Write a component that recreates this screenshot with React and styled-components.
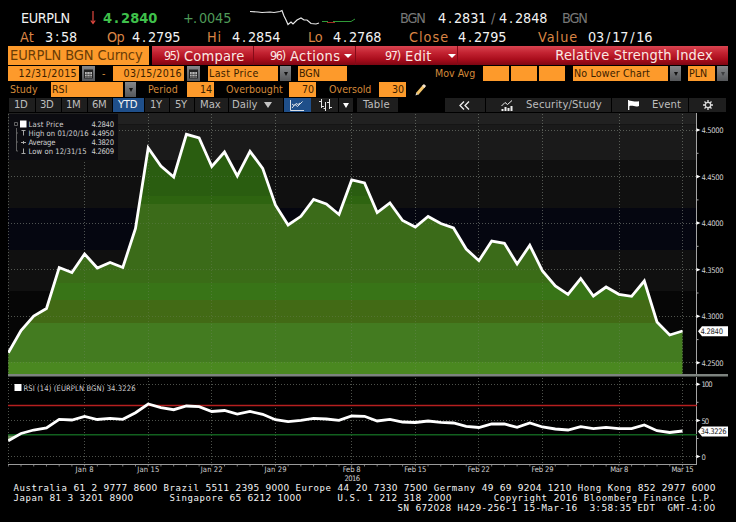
import React from "react";
import styled, { createGlobalStyle } from "styled-components";

const SANS = `"DejaVu Sans Condensed", "Noto Sans", sans-serif`;

const GlobalStyle = createGlobalStyle`
  body { margin: 0; background: #000; }
  * { box-sizing: border-box; }
`;

const Screen = styled.main`
  width: 736px;
  height: 522px;
  padding: 8px 8px 0;
  overflow: hidden;
  background: #000;
  color: #f4f4f4;
  font-family: ${SANS};
  font-stretch: condensed;
`;

const Row = styled.div`
  display: flex;
  align-items: center;
  height: ${(p) => p.$h}px;
  white-space: pre;
`;

/* ---------- quote header ---------- */

const TONES = {
  plain: "#f2f2f2",
  label: "#d98545",
  dim: "#777",
  up: "#4f9a58",
};

const QuoteText = styled.span`
  flex: none;
  width: ${(p) => p.$w}px;
  margin-left: ${(p) => p.$ml || 0}px;
  color: ${(p) => TONES[p.$tone || "plain"]};
  font-size: 14.3px;
  letter-spacing: ${(p) => p.$ls ?? -0.12}px;
`;

const LastPrice = styled(QuoteText)`
  color: #3fc04b;
  font-weight: 700;
  font-size: 14.5px;
`;

const Cell = styled.span`
  display: inline-block;
  width: ${(p) => p.$w}px;
  text-align: center;
`;

const cells = (value, w = 8) =>
  value.split(/([.:/+])/).filter(Boolean).map((part, i) =>
    /[.:/+]/.test(part) ? <Cell key={i} $w={w}>{part}</Cell> : part
  );

const Drawing = styled.svg`
  flex: none;
  display: block;
  margin-left: ${(p) => p.$ml || 0}px;
  overflow: visible;
`;

/* ---------- red menu bar ---------- */

const Security = styled.div`
  flex: none;
  width: 141px;
  height: 19px;
  margin-right: 3px;
  padding-left: 2px;
  background: #fd9a2b;
  color: #6a3c06;
  font-size: 14.5px;
  line-height: 19px;
  letter-spacing: -0.1px;
`;

const MenuBar = styled.div`
  display: flex;
  flex: 1;
  height: 19px;
  line-height: 18px;
  background: linear-gradient(#d94450 0, #c32332 35%, #aa0d1c 70%, #7e0613 100%);
`;

const MenuItem = styled.div`
  display: flex;
  align-items: center;
  flex: none;
  width: ${(p) => p.$w}px;
  padding-left: ${(p) => p.$pl}px;
  border-right: 1px solid #850b18;
  color: #fbe9e4;
  font-size: 14.5px;
  letter-spacing: ${(p) => p.$ls || 0}px;
`;

const MenuKey = styled.span`
  flex: none;
  width: ${(p) => p.$w || 20}px;
  font-size: 12.5px;
  letter-spacing: -1.3px;
`;

const Caret = styled.span`
  flex: none;
  width: 0;
  height: 0;
  margin-left: ${(p) => p.$ml || 0}px;
  border: ${(p) => p.$s || 4}px solid transparent;
  border-top: ${(p) => p.$h || (p.$s || 4)}px solid ${(p) => p.$c || "#fff"};
  border-bottom: 0;
`;

const BarTitle = styled.div`
  margin-left: auto;
  margin-right: 15px;
  color: #fbe9e4;
  font-size: 14.5px;
  letter-spacing: 0.2px;
`;

/* ---------- option fields ---------- */

const Field = styled.div`
  flex: none;
  width: ${(p) => p.$w}px;
  height: 15px;
  margin-left: ${(p) => p.$ml || 0}px;
  padding: 0 2px 0 1px;
  background: #fd9a2b;
  color: #3a2000;
  font-size: 10.6px;
  line-height: 14px;
  letter-spacing: ${(p) => p.$ls || 0}px;
  text-align: ${(p) => (p.$right ? "right" : "left")};
`;

const FieldLabel = styled.div`
  flex: none;
  width: ${(p) => p.$w}px;
  margin-left: ${(p) => p.$ml || 0}px;
  padding-bottom: 2px;
  color: #d58a3a;
  font-size: 10.6px;
  letter-spacing: ${(p) => p.$ls || 0}px;
`;

const DropButton = styled.div`
  display: flex;
  align-items: center;
  justify-content: center;
  flex: none;
  width: ${(p) => p.$w || 11}px;
  height: 15px;
  margin-left: ${(p) => p.$ml ?? 2}px;
  background: linear-gradient(#85878a, #55575a);
`;

/* ---------- toolbar ---------- */

const ToolButton = styled.div`
  display: flex;
  align-items: center;
  flex: none;
  width: ${(p) => p.$w}px;
  height: 14px;
  margin-left: ${(p) => p.$ml ?? 1}px;
  padding-left: ${(p) => p.$pl ?? 5}px;
  background: ${(p) => (p.$on ? "#1f4f8a" : "#1e1e1e")};
  color: ${(p) => (p.$on ? "#f4f4f4" : "#bdbdbd")};
  font-size: 11.2px;
  line-height: 14px;
  letter-spacing: ${(p) => p.$ls || 0}px;
`;

/* ---------- footer ---------- */

const Footer = styled.footer`
  padding-left: 5.5px;
  font-family: "DejaVu Sans Mono", monospace;
  font-size: 9px;
  line-height: 10px;
  letter-spacing: 0.58px;
  white-space: pre;
`;

const Digits = styled.span`
  font-family: "DejaVu Sans", sans-serif;
  font-stretch: normal;
  letter-spacing: 0.276px;
`;

const FOOTER = [
  "Australia 61 2 9777 8600 Brazil 5511 2395 9000 Europe 44 20 7330 7500 Germany 49 69 9204 1210 Hong Kong 852 2977 6000",
  "Japan 81 3 3201 8900      Singapore 65 6212 1000      U.S. 1 212 318 2000       Copyright 2016 Bloomberg Finance L.P.",
  " ".repeat(64) + "SN 672028 H429-256-1 15-Mar-16  3:58:35 EDT  GMT-4:00",
];

/* ---------- chart ---------- */

const X0 = 8.3;
const STEP = 12.72;
const BOTTOM = 374;
const PRICE = [
  352.7, 330.5, 316, 308.5, 267.5, 272.5, 254, 268, 262.5, 267.5, 228.5, 148,
  166, 177, 134.3, 138, 166.5, 152, 176, 151.3, 168.3, 205, 225, 216.3, 199.5,
  204, 214.5, 180, 183, 212.5, 203, 220.5, 227, 216.5, 223.5, 228, 249, 260.7,
  241, 243.3, 264, 245.3, 271, 286, 294.3, 278.5, 296, 287, 294.3, 296.3, 281,
  322, 335, 331,
];
const RSI = [
  440.7, 433.5, 430, 428, 419.3, 420, 416.5, 419.5, 418.3, 419.3, 412.7, 404,
  407.7, 409.7, 406, 406.7, 411.5, 410.5, 414, 411.5, 414.3, 419.7, 421.7,
  420.3, 418.3, 419, 420.3, 416, 416.3, 421, 419.3, 422, 422.5, 421, 422.3,
  423, 426.3, 427.5, 424, 424, 427.3, 423, 427, 429, 430, 426.7, 428.7, 427.3,
  428.7, 428.7, 425, 430.7, 432.5, 431,
];
const points = (ys) => ys.map((y, i) => `${(X0 + i * STEP).toFixed(1)},${y}`).join(" ");

const BACK_BANDS = [
  [113, 124.5, "#212121"], [124.5, 160, "#1a1a1a"], [160, 208, "#101010"],
  [208, 250, "#050610"], [250, 291, "#101010"], [291, 374, "#060606"],
];
const FILL_BANDS = [
  [113, 196, "#2a5d10"], [196, 204, "#2e6410"], [204, 271, "#3b6b19"],
  [271, 283, "#3a6c17"], [283, 300, "#387417"], [300, 323, "#426a15"],
  [323, 362, "#437b20"], [362, 375, "#4a8820"],
];
const WEEKS = [
  [84.5, "Jan 8", 18], [148.3, "Jan 15", 22], [211.7, "Jan 22", 22],
  [275.5, "Jan 29", 22], [351.7, "Feb 8", 18], [415.3, "Feb 15", 22],
  [478.8, "Feb 22", 22], [542.5, "Feb 29", 22], [619.3, "Mar 8", 18],
  [682.5, "Mar 15", 22],
];
const PRICE_TICKS = [
  [130, "4.5000"], [176.6, "4.4500"], [223, "4.4000"], [269.7, "4.3500"],
  [316.3, "4.3000"], [362.8, "4.2500"],
];
const RSI_TICKS = [[384.3, "100", 11], [420.5, "50", 7.5], [456.5, "0", 4]];
const LEGEND = [
  ["Last Price", 35, "4.2840"], ["High on 01/20/16", 60, "4.4950"],
  ["Average", 27, "4.3820"], ["Low on 12/31/15", 58, "4.2609"],
];

const ChartSvg = styled.svg`
  display: block;
  flex: none;
  overflow: hidden;
`;

const ChartText = styled.text`
  fill: ${(p) => p.$fill || "#d2d2d2"};
  font-family: ${SANS};
  font-stretch: condensed;
  font-size: 7.6px;
`;

const GridLine = styled.line`
  stroke: #8c9488;
  stroke-opacity: ${(p) => p.$o || 0.55};
  stroke-dasharray: 1 2;
`;

function Grid({ o }) {
  return (
    <g>
      <GridLine x1="8.5" x2="8.5" y1="114" y2="464" $o={o} />
      {WEEKS.map(([x]) => (
        <GridLine key={x} x1={Math.floor(x) + 0.5} x2={Math.floor(x) + 0.5} y1="114" y2="464" $o={o} />
      ))}
      {PRICE_TICKS.concat(RSI_TICKS).map(([y]) => (
        <GridLine key={y} x1="8" x2="696" y1={Math.floor(y) + 0.5} y2={Math.floor(y) + 0.5} $o={o} />
      ))}
    </g>
  );
}

function AxisTag({ y, label, w }) {
  return (
    <g>
      <path d={`M698 ${y} L702 ${y - 5} H728 V${y + 5} H702 Z`} fill="#fff" />
      <ChartText x="700.5" y={y + 2.8} textLength={w} $fill="#222">{label}</ChartText>
    </g>
  );
}

function Chart() {
  const right = X0 + 53 * STEP;
  return (
    <ChartSvg width="720" height="370" viewBox="8 113 720 370">
      <defs>
        <clipPath id="area">
          <polygon points={`${points(PRICE)} ${right},${BOTTOM} ${X0},${BOTTOM}`} />
        </clipPath>
      </defs>
      {BACK_BANDS.map(([a, b, c]) => <rect key={a} x="8" y={a} width="688" height={b - a} fill={c} />)}
      <Grid />
      <g clipPath="url(#area)">
        {FILL_BANDS.map(([a, b, c]) => <rect key={a} x="8" y={a} width="688" height={b - a} fill={c} />)}
        <Grid o={0.25} />
      </g>
      <polyline points={points(PRICE)} fill="none" stroke="#fff" strokeWidth="2.8" strokeLinejoin="miter" />

      <rect x="9" y="114" width="109" height="46" fill="#0c0c11" />
      <path d="M14.5 122.500h3v3h-3z M16.500 128V151 M16.500 133h1.500 M16.500 142h1.500 M16.500 151h1.500" fill="none" stroke="#777" strokeWidth="0.8" />
      <rect x="20" y="120.500" width="6.500" height="7" fill="#fff" />
      <path d="M21.500 130.500h4 M23.500 130.500v5 M21 142.500h5 M23.500 141v3 M21.500 153.500h4 M23.500 148.500v5" stroke="#b5b5b5" strokeWidth="0.9" />
      {LEGEND.map(([name, w, value], i) => (
        <g key={name}>
          <ChartText x="28.500" y={127 + i * 9.1} textLength={w}>{name}</ChartText>
          <ChartText x="91.500" y={127 + i * 9.1} textLength="22.500">{value}</ChartText>
        </g>
      ))}

      <rect x="8" y="374" width="720" height="2.500" fill="#7d837f" />
      <path d="M696.5 113V374 M696.500 377V464" stroke="#a4a4a4" />
      <path d="M8 464.500H697" stroke="#9a9a9a" />
      {PRICE.map((_, i) => (
        <line key={i} x1={X0 + i * STEP} x2={X0 + i * STEP} y1="464" y2="466.500" stroke="#9a9a9a" strokeWidth="0.8" />
      ))}

      {PRICE_TICKS.map(([y, label], i) => (
        <g key={label}>
          <path d={`M696.500 ${y - 1.8}L700.500 ${y}L696.500 ${y + 1.8}Z`} fill="#fff" />
          {i < 5 && <path d={`M697 ${y + 23.3}h1.500`} stroke="#aaa" />}
          <ChartText x="701.500" y={y + 3} textLength="22">{label}</ChartText>
        </g>
      ))}
      {RSI_TICKS.map(([y, label, w], i) => (
        <g key={label}>
          <path d={`M696.500 ${y - 1.8}L700.500 ${y}L696.500 ${y + 1.8}Z`} fill="#fff" />
          {i < 2 && <path d={`M697 ${y + 18}h1.500`} stroke="#aaa" />}
          <ChartText x="701.500" y={y + 3} textLength={w}>{label}</ChartText>
        </g>
      ))}

      <path d={`M8 435.200L8.300 440.700L18 435.200Z`} fill="#6f8f5c" />
      <path d="M8 405.400H697" stroke="#b51f1f" strokeWidth="1.500" />
      <path d="M8 434.700H697" stroke="#12601f" strokeWidth="1.400" />
      <polyline points={points(RSI)} fill="none" stroke="#fff" strokeWidth="2.800" />
      <rect x="14.500" y="384" width="7" height="7" fill="#fff" />
      <ChartText x="23.500" y="390.500" textLength="112">RSI (14) (EURPLN BGN) 34.3226</ChartText>

      <AxisTag y={331.2} label="4.2840" w={22.5} />
      <AxisTag y={431.4} label="34.3226" w={26} />

      {WEEKS.map(([x, label, w]) => (
        <ChartText key={label} x={x - w / 2} y="472.300" textLength={w}>{label}</ChartText>
      ))}
      <ChartText x="344.500" y="481" textLength="15.500">2016</ChartText>
    </ChartSvg>
  );
}

function CalendarIcon() {
  return (
    <Drawing width="9" height="10" viewBox="0 0 9 10">
      <rect x="0.500" y="1" width="8" height="8" fill="#b5b5b5" stroke="#222" />
      <path d="M0 2h9" stroke="#222" strokeWidth="2" />
      <path d="M1 5.500h7M1 7.500h7M3 3v6M6 3v6" stroke="#444" strokeWidth="0.700" />
    </Drawing>
  );
}

const Drop = ({ ml, dim }) => (
  <DropButton $ml={ml}><Caret $s={2.5} $h={4} $c={dim ? "#3c3e40" : "#111"} /></DropButton>
);

export default function App() {
  return (
    <Screen>
      <GlobalStyle />
      <Row $h={19}>
        <QuoteText $ml={13} $w={69} $ls={-0.4}>EURPLN</QuoteText>
        <Drawing width="6" height="14" viewBox="0 0 6 14">
          <path d="M3 0V12 M0.800 9.500L3 12.500L5.200 9.500" fill="none" stroke="#e0483f" strokeWidth="1.200" />
        </Drawing>
        <LastPrice $ml={7} $w={80} $ls={0}>{cells("4.2840", 9)}</LastPrice>
        <QuoteText $w={67} $ml={0} $tone="up">{cells("+.0045")}</QuoteText>
        <Drawing width="105" height="17" viewBox="250 9 105 17">
          <path d="M250 11.500L258 12L262 12.500L270 12L274 12.500L280 11.500L282 10.500L284 16L286 20L288 24.500L291 22L293 24L297 20L301 18L304 20L307 20L311 23.500L316 24L319 23" fill="none" stroke="#e8e8e8" strokeWidth="1.200" />
          <path d="M327 22.500h8" stroke="#a12c22" />
          <path d="M322 21.500H328M333 21.500H351L355 19" fill="none" stroke="#2f9a38" />
        </Drawing>
        <QuoteText $ml={45} $w={38} $tone="dim" $ls={-1.1}>BGN</QuoteText>
        <QuoteText $w={53}>{cells("4.2831")}</QuoteText>
        <QuoteText $w={8} $tone="dim">/</QuoteText>
        <QuoteText $w={63}>{cells("4.2848")}</QuoteText>
        <QuoteText $w={30} $tone="dim" $ls={-1.1}>BGN</QuoteText>
      </Row>
      <Row $h={19}>
        <QuoteText $ml={12} $w={25} $tone="label" $ls={0.3}>At</QuoteText>
        <QuoteText $w={62}>{cells("3:58")}</QuoteText>
        <QuoteText $w={25} $tone="label" $ls={-0.6}>Op</QuoteText>
        <QuoteText $w={75}>{cells("4.2795")}</QuoteText>
        <QuoteText $w={25} $tone="label" $ls={0.8}>Hi</QuoteText>
        <QuoteText $w={76}>{cells("4.2854")}</QuoteText>
        <QuoteText $w={25} $tone="label">Lo</QuoteText>
        <QuoteText $w={76}>{cells("4.2768")}</QuoteText>
        <QuoteText $w={49} $tone="label" $ls={1}>Close</QuoteText>
        <QuoteText $w={80}>{cells("4.2795")}</QuoteText>
        <QuoteText $w={50} $tone="label" $ls={1}>Value</QuoteText>
        <QuoteText $w={70}>{cells("03/17/16")}</QuoteText>
      </Row>

      <Row $h={19}>
        <Security>EURPLN BGN Curncy</Security>
        <MenuBar>
          <MenuItem $w={102} $pl={12} $ls={0.2}><MenuKey>95)</MenuKey>Compare</MenuItem>
          <MenuItem $w={102} $pl={16} $ls={0.4}><MenuKey>96)</MenuKey>Actions<Caret $ml={4} /></MenuItem>
          <MenuItem $w={102} $pl={29} $ls={0.4}><MenuKey>97)</MenuKey>Edit<Caret $ml={16} /></MenuItem>
          <BarTitle>Relative Strength Index</BarTitle>
        </MenuBar>
      </Row>

      <Row $h={17}>
        <Field $w={71} $ls={0.35} $right>12/31/2015</Field>
        <DropButton $w={13} $ml={3}><CalendarIcon /></DropButton>
        <FieldLabel $ml={7} $w={11}>-</FieldLabel>
        <Field $w={71} $ls={0.35} $right>03/15/2016</Field>
        <DropButton $w={13} $ml={3}><CalendarIcon /></DropButton>
        <Field $ml={8} $w={70} $ls={0.35}>Last Price</Field>
        <Drop />
        <Field $ml={7} $w={49}>BGN</Field>
        <FieldLabel $ml={88} $w={48}>Mov Avg</FieldLabel>
        <Field $w={26} />
        <Field $ml={2} $w={26} />
        <Field $ml={2} $w={26} />
        <Field $ml={8} $w={95} $ls={0.15}>No Lower Chart</Field>
        <Drop />
        <Field $ml={7} $w={27}>PLN</Field>
        <Drop dim />
      </Row>
      <Row $h={15}>
        <FieldLabel $ml={2} $w={41}>Study</FieldLabel>
        <Field $w={72}>RSI</Field>
        <Drop />
        <FieldLabel $ml={12} $w={39}>Period</FieldLabel>
        <Field $w={27} $right>14</Field>
        <FieldLabel $ml={12} $w={63}>Overbought</FieldLabel>
        <Field $w={27} $right>70</Field>
        <FieldLabel $ml={13} $w={50}>Oversold</FieldLabel>
        <Field $w={27} $right>30</Field>
        <Drawing $ml={9} width="12" height="12" viewBox="0 0 12 12">
          <path d="M2 10L9 2" stroke="#f3c46a" strokeWidth="3" />
          <path d="M8.200 3L10 1" stroke="#f3e3cf" strokeWidth="3" />
          <path d="M0.500 11.500L1.200 8.800L3 10.500Z" fill="#d7d7d7" />
        </Drawing>
      </Row>
      <Row $h={16}>
        <ToolButton $w={26} $ls={-0.4}>1D</ToolButton>
        <ToolButton $w={25} $pl={4} $ls={-0.4}>3D</ToolButton>
        <ToolButton $w={25} $pl={4} $ls={-0.4}>1M</ToolButton>
        <ToolButton $w={24} $pl={4} $ls={-0.4}>6M</ToolButton>
        <ToolButton $w={31} $ls={-0.3} $on>YTD</ToolButton>
        <ToolButton $w={24} $pl={5} $ls={-0.4}>1Y</ToolButton>
        <ToolButton $w={24} $pl={5} $ls={-0.4}>5Y</ToolButton>
        <ToolButton $w={33}>Max</ToolButton>
        <ToolButton $w={54} $pl={3}>Daily<Caret $ml={7} $s={4} $h={6} $c="#c4c4c4" /></ToolButton>
        <ToolButton $w={27} $pl={6} $on>
          <Drawing width="15" height="11" viewBox="0 0 15 11">
            <path d="M0.500 0V10.500H14 M2 8L5 4.500L7.500 6.500L12.500 1.500 M2 4L4 5.500L6 3.500L8 4.500L10 3" fill="none" stroke="#f0f0f0" strokeWidth="0.900" />
          </Drawing>
        </ToolButton>
        <ToolButton $ml={0} $w={27} $pl={8}>
          <Drawing width="13" height="12" viewBox="0 0 13 12">
            <path d="M2.500 0V9M0 2.500H2.500M2.500 7.500H5 M6.500 3V12M4.500 9.500H6.500 M10.500 0V10M8 3.500H10.500M10.500 8.500H13" fill="none" stroke="#e8e8e8" />
          </Drawing>
        </ToolButton>
        <ToolButton $w={14} $pl={4}><Caret $s={3} $h={5} /></ToolButton>
        <ToolButton $ml={4} $w={41} $pl={6} $ls={0.2}>Table</ToolButton>
        <ToolButton $ml={47} $w={40} $pl={14}>
          <Drawing width="11" height="9" viewBox="0 0 11 9">
            <path d="M5 0.500L1 4.500L5 8.500M10 0.500L6 4.500L10 8.500" fill="none" stroke="#eee" strokeWidth="1.300" />
          </Drawing>
        </ToolButton>
        <ToolButton $w={125} $pl={15} $ls={0.15}>
          <Drawing width="12" height="11" viewBox="0 0 12 11">
            <path d="M0.500 6L4 2.500L6.500 4.500L11 0.500" fill="none" stroke="#eee" />
            <path d="M1.500 11V9M4.500 11V7M7.500 11V8M10.500 11V6" stroke="#eee" strokeWidth="2" />
          </Drawing>
          <Cell $w={13} />Security/Study
        </ToolButton>
        <ToolButton $w={76} $pl={16}>
          <Drawing width="11" height="10" viewBox="0 0 11 10">
            <path d="M0.700 0V10" stroke="#fff" strokeWidth="1.300" />
            <path d="M1 1C4 0 6 2.500 11 1.200V6C7 7.500 5 5 1 6.200Z" fill="#fff" />
          </Drawing>
          <Cell $w={13} />Event
        </ToolButton>
        <ToolButton $w={37} $pl={14}>
          <Drawing width="10" height="10" viewBox="0 0 10 10">
            <circle cx="5" cy="5" r="2.700" fill="none" stroke="#ddd" strokeWidth="1.300" />
            <path d="M5 0V2M5 8V10M0 5H2M8 5H10M1.500 1.500L3 3M7 7L8.500 8.500M8.500 1.500L7 3M3 7L1.500 8.500" stroke="#ddd" strokeWidth="1.300" />
          </Drawing>
        </ToolButton>
      </Row>

      <Chart />

      <Footer>
        {FOOTER.map((line) => (
          <div key={line}>
            {line.split(/(\d+)/).map((part, i) => (i % 2 ? <Digits key={i}>{part}</Digits> : part))}
          </div>
        ))}
      </Footer>
    </Screen>
  );
}
